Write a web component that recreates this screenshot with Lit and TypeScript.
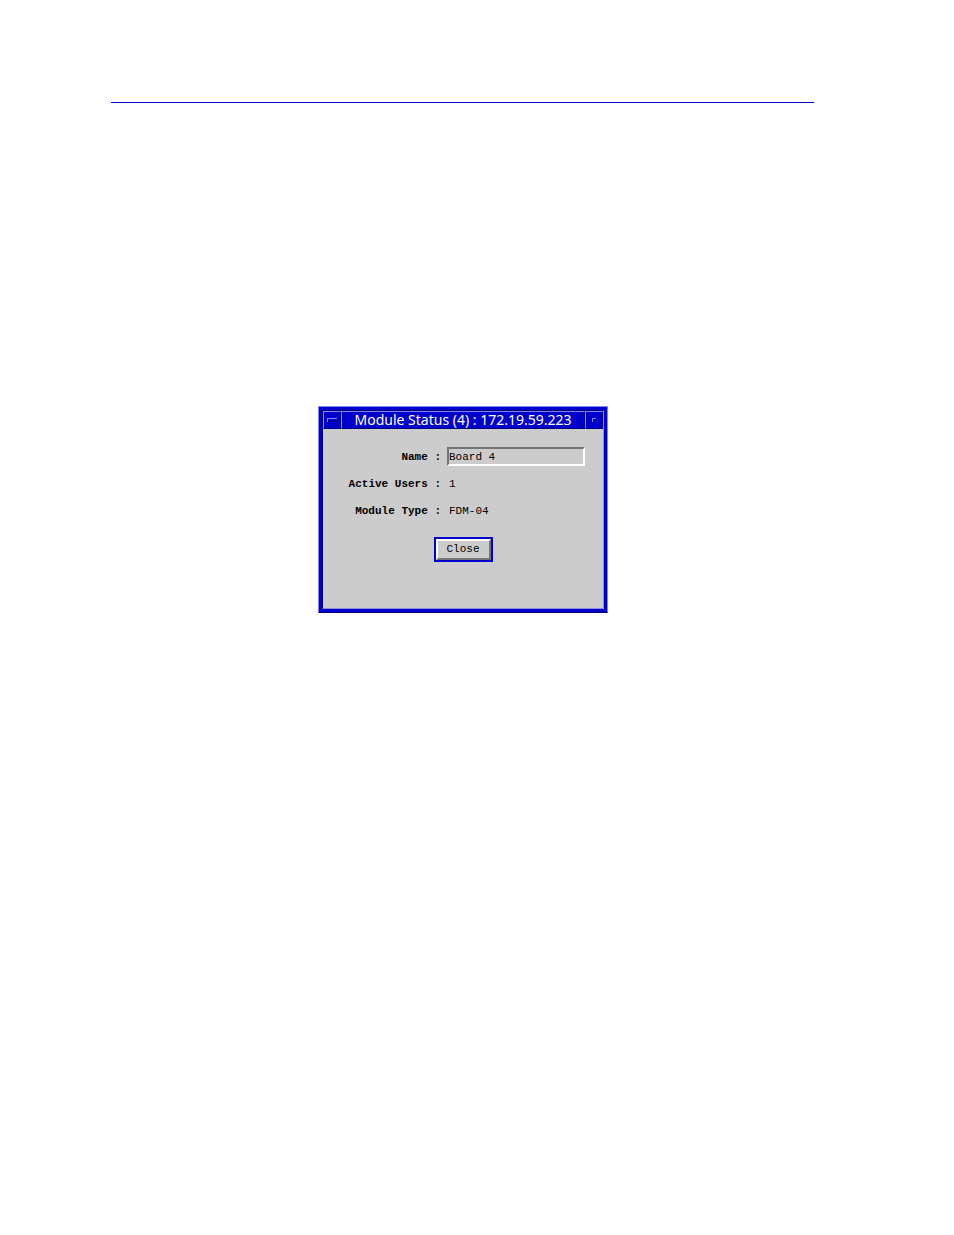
import { LitElement, html, css } from 'lit';
import { customElement, property } from 'lit/decorators.js';

@customElement('status-window')
class StatusWindow extends LitElement {
  @property({ type: String }) header = '';
  @property({ type: String }) name = '';
  @property({ type: String }) users = '';
  @property({ type: String }) type = '';

  static styles = css`
    :host {
      display: block;
      box-sizing: border-box;
      width: 290px;
      max-width: 100%;
      border: 1px solid #8484f4;
      border-bottom-color: #000078;
    }

    .frame {
      border: 3px solid #0000cc;
      background: #cccccc;
    }

    .inner {
      border: 1px solid #000078;
      border-right-color: #8c8cd8;
      border-bottom-color: #8c8cd8;
    }

    .titlebar {
      display: flex;
      height: 18px;
      background: #0000cc;
      color: #ffffff;
    }

    .corner,
    .title {
      box-sizing: border-box;
      margin: 0;
      border: 1px solid;
      border-color: #8484f4 #000078 #000078 #8484f4;
    }

    .corner {
      display: flex;
      flex: none;
      align-items: center;
      justify-content: center;
      width: 18px;
      padding: 0;
      background: #0000cc;
    }

    .title {
      flex: 1;
      font-family: 'Noto Sans', sans-serif;
      font-size: 14px;
      font-weight: 400;
      line-height: 16px;
      text-align: center;
      white-space: pre;
    }

    .body {
      padding: 18px 18px 46px;
      font-family: 'Liberation Mono', monospace;
      font-size: 11px;
      color: #000000;
    }

    .fields {
      display: grid;
      grid-template-columns: 100px 1fr;
      column-gap: 6px;
      row-gap: 9px;
      align-items: center;
      line-height: 18px;
    }

    .label {
      font-weight: 700;
      text-align: right;
      white-space: nowrap;
    }

    .name {
      box-sizing: border-box;
      width: 100%;
      height: 19px;
      margin: 0;
      padding: 0;
      border: 2px solid;
      border-color: #747474 #ffffff #ffffff #747474;
      border-radius: 0;
      outline: none;
      background: #cccccc;
      font: inherit;
      color: inherit;
    }

    .value {
      padding-left: 2px;
    }

    .close {
      display: block;
      box-sizing: border-box;
      width: 59px;
      height: 25px;
      margin: 17px auto 0;
      padding: 0;
      border: 2px solid #0000cc;
      background: #cccccc;
      font: inherit;
      color: inherit;
    }

    .face {
      display: block;
      border: 2px solid;
      border-color: #ffffff #747474 #747474 #ffffff;
      line-height: 17px;
    }
  `;

  render() {
    return html`
      <div class="frame">
        <div class="inner">
          <div class="titlebar">
            <button class="corner" aria-label="Window menu">
              <svg width="10" height="4" viewBox="0 0 10 4" shape-rendering="crispEdges">
                <path d="M0 3.5H10M9.5 0V4" stroke="#000078" fill="none" />
                <path d="M0.5 4V0.5H10" stroke="#8484f4" fill="none" />
              </svg>
            </button>
            <h1 class="title">${this.header}</h1>
            <button class="corner" aria-label="Minimize">
              <svg width="4" height="4" viewBox="0 0 4 4" shape-rendering="crispEdges">
                <path d="M0 3.5H4M3.5 0V4" stroke="#000078" fill="none" />
                <path d="M0.5 4V0.5H4" stroke="#8484f4" fill="none" />
              </svg>
            </button>
          </div>
          <div class="body">
            <div class="fields">
              <label class="label" for="name">Name :</label>
              <input class="name" id="name" type="text" .value=${this.name} />
              <span class="label">Active Users :</span>
              <span class="value">${this.users}</span>
              <span class="label">Module Type :</span>
              <span class="value">${this.type}</span>
            </div>
            <button class="close"><span class="face">Close</span></button>
          </div>
        </div>
      </div>
    `;
  }
}

@customElement('app-root')
class AppRoot extends LitElement {
  static styles = css`
    :host {
      display: block;
      padding: 102px 140px 48px 111px;
      background: #ffffff;
    }

    .rule {
      height: 1px;
      margin: 0;
      border: 0;
      background: #0000cc;
    }

    .figure {
      display: flex;
      justify-content: center;
      margin: 303px 0 0 1px;
    }
  `;

  render() {
    return html`
      <hr class="rule" />
      <main class="figure">
        <status-window
          header="Module Status (4) : 172.19.59.223"
          name="Board 4"
          users="1"
          type="FDM-04"
        ></status-window>
      </main>
    `;
  }
}
